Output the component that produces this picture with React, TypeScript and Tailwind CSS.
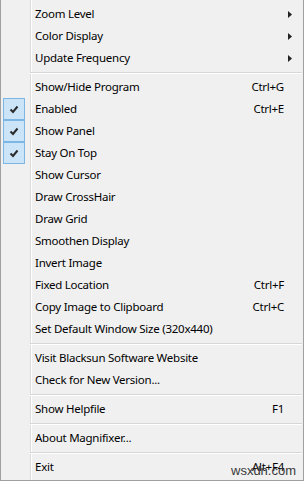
import React from "react"

type Item =
  | { sep: true }
  | { sep?: false; label: string; shortcut?: string; sub?: boolean; checked?: boolean }

const items: Item[] = [
  { label: "Zoom Level", sub: true },
  { label: "Color Display", sub: true },
  { label: "Update Frequency", sub: true },
  { sep: true },
  { label: "Show/Hide Program", shortcut: "Ctrl+G" },
  { label: "Enabled", shortcut: "Ctrl+E", checked: true },
  { label: "Show Panel", checked: true },
  { label: "Stay On Top", checked: true },
  { label: "Show Cursor" },
  { label: "Draw CrossHair" },
  { label: "Draw Grid" },
  { label: "Smoothen Display" },
  { label: "Invert Image" },
  { label: "Fixed Location", shortcut: "Ctrl+F" },
  { label: "Copy Image to Clipboard", shortcut: "Ctrl+C" },
  { label: "Set Default Window Size (320x440)" },
  { sep: true },
  { label: "Visit Blacksun Software Website" },
  { label: "Check for New Version..." },
  { sep: true },
  { label: "Show Helpfile", shortcut: "F1" },
  { sep: true },
  { label: "About Magnifixer..." },
  { sep: true },
  { label: "Exit", shortcut: "Alt+F4" },
]

function Check() {
  return (
    <div className="ml-[2px] flex h-[22px] w-[22px] items-center justify-center border border-[#7db6e3] bg-[#cce4f7]">
      <svg width="10" height="9" viewBox="0 0 10 9">
        <path d="M1.5 4.5 L4 7 L8.5 1.5" fill="none" stroke="#2b2b2b" strokeWidth="2" />
      </svg>
    </div>
  )
}

export default function App() {
  return (
    <div
      className="relative flex h-[481px] w-[304px] flex-col border-x border-b border-[#a0a0a0] bg-[#f0f0f0] bg-[linear-gradient(to_right,transparent_29px,#dcdcdc_29px,#dcdcdc_30px,#ffffff_30px,#ffffff_31px,transparent_31px)] pt-[3px] pb-[2px] text-[11.5px] tracking-[-0.25px] text-black"
      style={{ fontFamily: '"Noto Sans", "Open Sans", sans-serif' }}
    >
      {items.map((it, i) =>
        it.sep ? (
          <div key={i} className="h-[7px] pl-[29px] pr-[1px] pt-[3px]">
            <div className="h-px bg-[#d7d7d7]" />
            <div className="h-px bg-white" />
          </div>
        ) : (
          <div key={i} className="flex h-[22px] items-center">
            <div className="flex h-full w-[34px] shrink-0 items-center">
              {it.checked && <Check />}
            </div>
            <div className="flex-1 whitespace-nowrap">{it.label}</div>
            <div className="whitespace-nowrap">{it.shortcut}</div>
            <div className="flex h-full w-[19px] shrink-0 items-center pl-[4px]">
              {it.sub && (
                <svg width="4" height="7" viewBox="0 0 4 7">
                  <path d="M0 0 L4 3.5 L0 7 Z" fill="#222" />
                </svg>
              )}
            </div>
          </div>
        )
      )}
      <span
        className="absolute left-[230px] top-[461px] text-[13px] tracking-normal text-[#3a3a3a]"
        style={{ fontFamily: '"Liberation Sans", Arial, sans-serif' }}
      >
        wsxdn.com
      </span>
    </div>
  )
}
